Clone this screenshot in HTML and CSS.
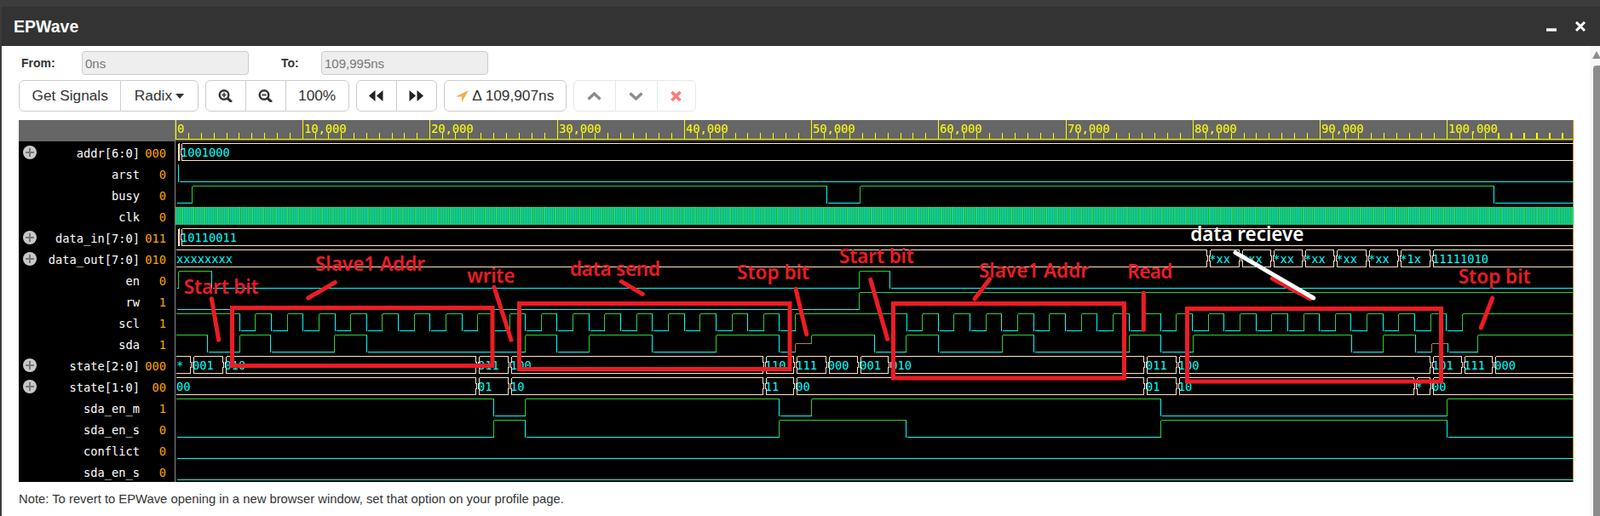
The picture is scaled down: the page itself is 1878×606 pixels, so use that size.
FILE: index.html
```html
<!DOCTYPE html>
<html lang="en">
<head>
  <meta charset="UTF-8">
  <meta name="viewport" content="width=device-width, initial-scale=1">
  <title>EPWave</title>
  <link rel="stylesheet" href="styles.css">
</head>
<body>
  <div class="modal">
    <div class="modal-header">
      <span class="modal-title">EPWave</span>
      <svg class="win-icon min-icon" width="12" height="4" viewBox="0 0 12 4"><rect width="12" height="3.4" y="0.3" fill="#fff"/></svg>
      <svg class="win-icon" width="12" height="12" viewBox="0 0 12 12"><path d="M1 1L11 11M11 1L1 11" stroke="#fff" stroke-width="3" fill="none"/></svg>
    </div>

    <div class="modal-main">
      <div class="modal-body">
        <div class="range-row">
          <label class="range-label from-label">From:</label>
          <input class="range-input" type="text" value="0ns" disabled>
          <label class="range-label to-label">To:</label>
          <input class="range-input" type="text" value="109,995ns" disabled>
        </div>

        <div class="toolbar">
          <div class="btn-group">
            <button class="btn">Get Signals</button>
            <button class="btn btn-radix">Radix <span class="caret"></span></button>
          </div>
          <div class="btn-group">
            <button class="btn">
              <svg width="17" height="15" viewBox="0 0 17 15"><circle cx="7" cy="6.5" r="5.3" fill="none" stroke="#333" stroke-width="2.4"/><path d="M11 10.5L15 14" stroke="#333" stroke-width="3" stroke-linecap="round"/><path d="M4.3 6.5H9.7M7 3.8V9.2" stroke="#333" stroke-width="1.6"/></svg>
            </button>
            <button class="btn">
              <svg width="17" height="15" viewBox="0 0 17 15"><circle cx="7" cy="6.5" r="5.3" fill="none" stroke="#333" stroke-width="2.4"/><path d="M11 10.5L15 14" stroke="#333" stroke-width="3" stroke-linecap="round"/><path d="M4.3 6.5H9.7" stroke="#333" stroke-width="1.8"/></svg>
            </button>
            <button class="btn">100%</button>
          </div>
          <div class="btn-group">
            <button class="btn">
              <svg width="17" height="13" viewBox="0 0 17 13"><path d="M7.5 0V13L0 6.5ZM16.5 0V13L9 6.5Z" fill="#222"/></svg>
            </button>
            <button class="btn">
              <svg width="17" height="13" viewBox="0 0 17 13"><path d="M0.5 0V13L8 6.5ZM9.5 0V13L17 6.5Z" fill="#222"/></svg>
            </button>
          </div>
          <div class="btn-group">
            <button class="btn btn-delta">
              <svg width="15" height="14" viewBox="0 0 15 14"><path d="M15 0L0 7.6H7V14Z" fill="#f0ad4e"/></svg>
              Δ 109,907ns
            </button>
          </div>
          <div class="btn-group disabled">
            <button class="btn">
              <svg width="17" height="10" viewBox="0 0 17 10"><path d="M1.5 8.5L8.5 2L15.5 8.5" fill="none" stroke="#8c8c8c" stroke-width="3.4"/></svg>
            </button>
            <button class="btn">
              <svg width="17" height="10" viewBox="0 0 17 10"><path d="M1.5 1.5L8.5 8L15.5 1.5" fill="none" stroke="#8c8c8c" stroke-width="3.4"/></svg>
            </button>
            <button class="btn">
              <svg width="13" height="12" viewBox="0 0 13 12"><path d="M1.5 1L11.5 11M11.5 1L1.5 11" fill="none" stroke="#ff7a7a" stroke-width="3.6"/></svg>
            </button>
          </div>
        </div>

        <div class="wave-panel">
          <div class="signal-names">
            <div class="ruler-spacer"></div>
            <div class="sig"><span class="expand"></span><span class="sig-name">addr[6:0]</span><span class="sig-val">000</span></div>
            <div class="sig"><span class="sig-name">arst</span><span class="sig-val">0</span></div>
            <div class="sig"><span class="sig-name">busy</span><span class="sig-val">0</span></div>
            <div class="sig"><span class="sig-name">clk</span><span class="sig-val">0</span></div>
            <div class="sig"><span class="expand"></span><span class="sig-name">data_in[7:0]</span><span class="sig-val">011</span></div>
            <div class="sig"><span class="expand"></span><span class="sig-name">data_out[7:0]</span><span class="sig-val">010</span></div>
            <div class="sig"><span class="sig-name">en</span><span class="sig-val">0</span></div>
            <div class="sig"><span class="sig-name">rw</span><span class="sig-val">1</span></div>
            <div class="sig"><span class="sig-name">scl</span><span class="sig-val">1</span></div>
            <div class="sig"><span class="sig-name">sda</span><span class="sig-val">1</span></div>
            <div class="sig"><span class="expand"></span><span class="sig-name">state[2:0]</span><span class="sig-val">000</span></div>
            <div class="sig"><span class="expand"></span><span class="sig-name">state[1:0]</span><span class="sig-val">00</span></div>
            <div class="sig"><span class="sig-name">sda_en_m</span><span class="sig-val">1</span></div>
            <div class="sig"><span class="sig-name">sda_en_s</span><span class="sig-val">0</span></div>
            <div class="sig"><span class="sig-name">conflict</span><span class="sig-val">0</span></div>
            <div class="sig"><span class="sig-name">sda_en_s</span><span class="sig-val">0</span></div>
          </div>

          <svg class="wave-canvas" width="1641" height="425" viewBox="206 141 1641 425">
            <g id="ruler"></g>
            <g id="waves"></g>
            <g class="marks">
              <rect x="272.5" y="361.5" width="305.5" height="68"/>
              <rect x="609.5" y="356.5" width="317.5" height="77"/>
              <rect x="1048.5" y="356.5" width="271" height="87.5"/>
              <rect x="1393.5" y="362.5" width="298" height="85.5"/>
              <line x1="248.3" y1="350.7" x2="256.7" y2="399.3"/>
              <line x1="361.7" y1="350" x2="393.3" y2="331.7"/>
              <line x1="580" y1="337.3" x2="600" y2="399.3"/>
              <line x1="729.3" y1="330.7" x2="754.3" y2="345.3"/>
              <line x1="934" y1="339.3" x2="946.7" y2="392.7"/>
              <line x1="1021.7" y1="328.3" x2="1041.7" y2="398.3"/>
              <line x1="1161.7" y1="327.7" x2="1144" y2="351"/>
              <line x1="1342.3" y1="344" x2="1342.3" y2="387.3"/>
              <line x1="1751.7" y1="350" x2="1738.3" y2="385"/>
              <line x1="1493.3" y1="327" x2="1538" y2="351"/>
              <line class="white" x1="1450" y1="296.7" x2="1541.7" y2="350"/>
              <text x="215.7" y="345" textLength="88">Start bit</text>
              <text x="370" y="318.3" textLength="129">Slave1 Addr</text>
              <text x="548.3" y="332.3" textLength="56">write</text>
              <text x="669" y="324.3" textLength="106">data send</text>
              <text x="865" y="327.7" textLength="85">Stop bit</text>
              <text x="985" y="309.3" textLength="88">Start bit</text>
              <text x="1149" y="326" textLength="129">Slave1 Addr</text>
              <text x="1323.3" y="327.3" textLength="53">Read</text>
              <text x="1711.7" y="332.7" textLength="85">Stop bit</text>
              <text class="white-text" x="1397.3" y="283.3" textLength="133">data recieve</text>
            </g>
          </svg>
        </div>

        <p class="note">Note: To revert to EPWave opening in a new browser window, set that option on your profile page.</p>
      </div>

      <div class="scrollbar">
        <div class="scroll-arrow"></div>
        <div class="scroll-thumb"></div>
      </div>
    </div>
  </div>

  <script src="wave.js"></script>
</body>
</html>
```

FILE: styles.css
```css
html, body {
  height: 100%;
  margin: 0;
  overflow: hidden;
}
body {
  background: #3c3c3c;
  font-family: "Liberation Sans", Arial, sans-serif;
  color: #333;
}
.modal {
  display: flex;
  flex-direction: column;
  height: calc(100% - 8px);
  margin: 8px 0 0 2px;
  background: #fff;
}
.modal-header {
  display: flex;
  align-items: center;
  height: 46px;
  padding: 0 17px 0 14px;
  background: #333;
  flex-shrink: 0;
}
.modal-title {
  flex: 1;
  font-size: 19.5px;
  font-weight: bold;
  color: #fff;
}
.win-icon {
  margin-left: 22px;
  margin-bottom: 1px;
}
.min-icon {
  margin-top: 9px;
}
.modal-main {
  display: flex;
  flex: 1;
  min-height: 0;
}
.modal-body {
  flex: 1;
  min-width: 0;
  padding: 6px 0 0 20px;
}
.range-row {
  display: flex;
  align-items: center;
  height: 28px;
}
.range-label {
  font-size: 14px;
  font-weight: bold;
}
.from-label {
  margin-left: 3px;
  width: 71px;
}
.to-label {
  margin-left: 38px;
  width: 47px;
}
.range-input {
  box-sizing: border-box;
  width: 196px;
  height: 28px;
  padding: 0 3px;
  background: #eee;
  border: 1px solid #ccc;
  border-radius: 4px;
  font-family: "Liberation Sans", Arial, sans-serif;
  font-size: 15px;
  color: #777;
}
.toolbar {
  display: flex;
  gap: 8px;
  margin-top: 6px;
}
.btn-group {
  display: flex;
  height: 37px;
}
.btn {
  display: flex;
  align-items: center;
  gap: 4px;
  height: 37px;
  margin-left: -1px;
  padding: 0 14.5px;
  background: #fff;
  border: 1px solid #ccc;
  font-family: "Liberation Sans", Arial, sans-serif;
  font-size: 17.3px;
  color: #333;
  cursor: pointer;
}
.btn:first-child {
  margin-left: 0;
  border-radius: 6px 0 0 6px;
}
.btn:last-child {
  border-radius: 0 6px 6px 0;
}
.btn:only-child {
  border-radius: 6px;
}
.btn-radix {
  padding: 0 15.5px;
}
.btn-delta {
  padding: 0 13.5px;
}
.disabled .btn {
  padding: 0 15.5px;
  border-color: #e8e8e8;
}
.caret {
  width: 0;
  height: 0;
  border-left: 5px solid transparent;
  border-right: 5px solid transparent;
  border-top: 6px solid #333;
}
.wave-panel {
  display: flex;
  width: 1825px;
  height: 425px;
  margin-top: 10px;
  background: #000;
  overflow: hidden;
}
.signal-names {
  box-sizing: border-box;
  width: 184px;
  flex-shrink: 0;
  border-right: 1px solid #888;
  font-family: "DejaVu Sans Mono", monospace;
  font-size: 13.7px;
  color: #fff;
}
.ruler-spacer {
  height: 25px;
  margin-bottom: 1px;
  background: #666;
}
.sig {
  display: flex;
  align-items: center;
  height: 25px;
  padding-left: 5px;
  padding-right: 10px;
}
.expand {
  position: relative;
  width: 16px;
  height: 16px;
  margin-top: -1px;
  border-radius: 50%;
  background: #c8c8c8;
}
.expand::before, .expand::after {
  content: "";
  position: absolute;
  background: #777;
}
.expand::before {
  left: 3px;
  top: 7px;
  width: 10px;
  height: 2px;
}
.expand::after {
  left: 7px;
  top: 3px;
  width: 2px;
  height: 10px;
}
.sig-name {
  flex: 1;
  text-align: right;
}
.sig-val {
  width: 31px;
  text-align: right;
  color: #ffa500;
}
.wave-canvas {
  display: block;
  flex-shrink: 0;
}
.wave-canvas path, .wave-canvas .tick {
  fill: none;
  shape-rendering: crispEdges;
}
.ruler-bg {
  fill: #666;
  shape-rendering: crispEdges;
}
.ruler-foot {
  fill: #444;
  shape-rendering: crispEdges;
}
.tick {
  stroke: #ff0;
}
.ruler-label {
  fill: #ff0;
  font-family: "DejaVu Sans Mono", monospace;
  font-size: 13.7px;
}
.end-mark {
  stroke: #b8860b;
  shape-rendering: crispEdges;
}
.hi { stroke: #32cd32; }
.lo { stroke: #0ff; }
.mid { stroke: #b8803c; }
.bus { stroke: #ffe4c4; }
.clk {
  stroke-opacity: 0.85;
}
.bus-text {
  fill: #0ff;
  font-family: "DejaVu Sans Mono", monospace;
  font-size: 13.7px;
}
.marks rect {
  fill: none;
  stroke: #ed1c24;
  stroke-width: 5;
}
.marks line {
  stroke: #ed1c24;
  stroke-width: 5;
  stroke-linecap: round;
}
.marks .white {
  stroke: #fff;
}
.marks text {
  fill: #ed1c24;
  font-family: "Noto Sans", sans-serif;
  font-size: 22.5px;
  font-weight: 600;
}
.marks .white-text {
  fill: #fff;
}
.note {
  margin: 12px 0 0;
  font-size: 14.8px;
  line-height: 16px;
}
.scrollbar {
  width: 12px;
  flex-shrink: 0;
  background: #f7f7f7;
  overflow: hidden;
}
.scroll-arrow {
  width: 0;
  height: 0;
  margin: 6px 0 0 3px;
  border-left: 5px solid transparent;
  border-right: 5px solid transparent;
  border-bottom: 9px solid #8c8c8c;
}
.scroll-thumb {
  height: 600px;
  margin: 8px 0 0 4px;
  background: #8c8c8c;
  border-radius: 4px 0 0 0;
}
```

FILE: wave.js
```js
const END = 1847;
const TOP = 168;

function rowTop(i) {
  return TOP + 25 * i;
}

function px(v) {
  return Math.round(v) + 0.5;
}

// levels: [[x, 1 | 0 | 'z'], ...], rising edges green, falling edges cyan
function logic(row, levels) {
  const t = rowTop(row);
  const ys = { 1: t + 0.5, 0: t + 20.5, z: t + 10.5 };
  let hi = '', lo = '', mid = '';
  levels.forEach(function (s, i) {
    const x = px(s[0]);
    const next = i + 1 < levels.length ? px(levels[i + 1][0]) : END;
    const y = ys[s[1]];
    const seg = 'M' + (s[1] === 0 ? x + 1 : x) + ' ' + y + 'H' + next;
    if (s[1] === 1) hi += seg;
    else if (s[1] === 0) lo += seg;
    else mid += seg;
    if (i > 0) {
      const py = ys[levels[i - 1][1]];
      const edge = 'M' + x + ' ' + py + 'V' + y;
      if (s[1] === 'z') mid += edge;
      else if (y < py) hi += edge;
      else lo += edge;
    }
  });
  return '<path class="hi" d="' + hi + '"/><path class="lo" d="' + lo + '"/><path class="mid" d="' + mid + '"/>';
}

// start level plus a list of toggle positions
function toggles(row, startX, start, edges) {
  const levels = [[startX, start]];
  let lvl = start;
  edges.forEach(function (x) {
    lvl = lvl ? 0 : 1;
    levels.push([x, lvl]);
  });
  return logic(row, levels);
}

// segs: [[x, text], ...]
function bus(row, segs) {
  const t = rowTop(row);
  const top = t + 0.5, bot = t + 20.5, mid = t + 10.5;
  let d = '', text = '';
  segs.forEach(function (s, i) {
    const a = px(s[0]);
    const last = i === segs.length - 1;
    const b = last ? END : px(segs[i + 1][0]);
    const open = s[0] <= 206;
    const left = open ? a : a + 2;
    d += 'M' + left + ' ' + top + 'H' + (last ? b : b - 2);
    d += 'M' + left + ' ' + bot + 'H' + (last ? b : b - 2);
    if (!last) {
      d += 'M' + (b - 2) + ' ' + top + 'V' + (mid - 4) + 'L' + (b - 1) + ' ' + (mid - 2) + 'V' + (mid + 2) + 'L' + (b - 2) + ' ' + (mid + 4) + 'V' + bot;
    }
    if (!open) {
      d += 'M' + left + ' ' + top + 'V' + (mid - 4) + 'L' + (left - 1) + ' ' + (mid - 2) + 'V' + (mid + 2) + 'L' + left + ' ' + (mid + 4) + 'V' + bot;
    }
    if (s[1]) {
      text += '<text class="bus-text" x="' + (s[0] + 1) + '" y="' + (t + 16) + '">' + s[1] + '</text>';
    }
  });
  return '<path class="bus" d="' + d + '"/>' + text;
}

function clock(row) {
  const t = rowTop(row);
  const half = 0.932;
  let hi = '', lo = '';
  for (let k = 0; 206 + k * half < END; k++) {
    const edge = 'M' + px(206 + k * half) + ' ' + t + 'V' + (t + 21);
    if (k % 2) lo += edge;
    else hi += edge;
  }
  // green goes on last so it wins where two edges land on one pixel
  return '<path class="lo clk" d="' + lo + '"/><path class="hi clk" d="' + hi + '"/>';
}

function sclEdges() {
  const out = [];
  for (let n = 0; n <= 77; n++) {
    if (n <= 35 || n >= 42) out.push(280.67 + 18.64 * n);
  }
  return out;
}

function drawRuler() {
  let html = '<rect class="ruler-bg" x="206" y="141" width="1641" height="25"/>';
  html += '<rect class="ruler-foot" x="206" y="164" width="1641" height="2"/>';
  html += '<line class="tick" x1="206" y1="163.5" x2="' + END + '" y2="163.5"/>';
  for (let k = 0; k <= 109; k++) {
    const x = px(205.8 + 14.925 * k);
    if (k % 10 === 0) {
      html += '<line class="tick" x1="' + x + '" y1="141" x2="' + x + '" y2="164"/>';
      const label = (k * 1000).toLocaleString('en-US');
      html += '<text class="ruler-label" x="' + (x + 1.5) + '" y="155.7">' + label + '</text>';
    } else {
      const w = x > 1755 ? ' stroke-width="2"' : '';
      html += '<line class="tick"' + w + ' x1="' + x + '" y1="156" x2="' + x + '" y2="164"/>';
    }
  }
  html += '<line class="end-mark" x1="1846.5" y1="141" x2="1846.5" y2="566"/>';
  document.getElementById('ruler').innerHTML = html;
}

function drawWaves() {
  let html = '';
  html += bus(0, [[208, ''], [211, '1001000']]);
  html += logic(1, [[208, 1], [209.4, 0]]);
  html += toggles(2, 206, 0, [224.8, 970.4, 1008.6, 1753]);
  html += clock(3);
  html += bus(4, [[208, ''], [211, '10110011']]);
  html += bus(5, [[206, 'xxxxxxxx'], [1418.3, '*xx'], [1456, '*xx'], [1493.3, '*xx'], [1530, '*xx'], [1567.3, '*xx'], [1605, '*xx'], [1642.3, '*1x'], [1680, '11111010']]);
  html += toggles(6, 206, 0, [209.3, 247.6, 1008.3, 1044.3]);
  html += toggles(7, 206, 0, [1008.3]);
  html += toggles(8, 206, 1, sclEdges());
  html += logic(9, [
    [206, 1], [243.4, 0], [280.6, 1], [317.4, 0], [392.2, 1], [430, 0], [616, 1],
    [653.4, 0], [690.5, 1], [765.4, 0], [840, 1], [914.3, 0], [933.4, 'z'], [951.8, 1],
    [1025.7, 0], [1063.3, 1], [1101, 0], [1176, 1], [1213.4, 0], [1325, 1], [1361.7, 0],
    [1400, 1], [1585.7, 0], [1623.3, 1], [1660.7, 0], [1680, 'z'], [1698.6, 0], [1734.3, 1]
  ]);
  html += bus(10, [[206, '*'], [225, '001'], [262.5, '010'], [560, '011'], [598, '100'], [896.7, '110'], [933.3, '111'], [970.7, '000'], [1008.3, '001'], [1044.3, '010'], [1344, '011'], [1381.7, '100'], [1680, '101'], [1717.3, '111'], [1753.3, '000']]);
  html += bus(11, [[206, '00'], [560, '01'], [598, '10'], [896.7, '11'], [933.3, '00'], [1344, '01'], [1381.7, '10'], [1660.6, '*'], [1680, '00']]);
  html += toggles(12, 206, 1, [579, 616, 914.3, 952.2, 1362, 1698.4]);
  html += toggles(13, 206, 0, [579, 616, 914.3, 1063.3, 1362, 1698.4]);
  html += toggles(14, 206, 0, []);
  html += toggles(15, 206, 0, []);
  document.getElementById('waves').innerHTML = html;
}

drawRuler();
drawWaves();
```
